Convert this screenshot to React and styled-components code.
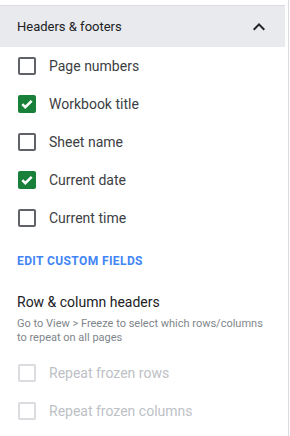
import React from "react";
import styled, { createGlobalStyle } from "styled-components";

const Global = createGlobalStyle`
  html, body { margin: 0; padding: 0; background: #fff; }
  body { font-family: Roboto, "Noto Sans", Arial, sans-serif; -webkit-font-smoothing: antialiased; }
`;

const Frame = styled.div`
  width: 289px;
  height: 436px;
  border-right: 1px solid #dadce0;
  padding-top: 5px;
  box-sizing: border-box;
  overflow: hidden;
`;

const Section = styled.section`
  width: 285px;
  border-top: 1px solid #dadce0;
`;

const SectionHeader = styled.div`
  height: 41px;
  background: #e8eaed;
  display: flex;
  align-items: center;
  justify-content: space-between;
  padding: 0 14px 0 17px;
  color: #202124;
  font-size: 13px;
`;

const Chevron = styled.svg`
  width: 24px;
  height: 24px;
  fill: #202124;
`;

const Body = styled.div`
  padding: 0 17px;
`;

const Row = styled.label`
  height: 38px;
  display: flex;
  align-items: center;
  gap: 13px;
  padding-left: 1px;
  font-size: 14px;
  color: ${(p) => (p.$disabled ? "#bdc1c6" : "#3c4043")};
`;

const Box = styled.span`
  width: 18px;
  height: 18px;
  box-sizing: border-box;
  border-radius: 2px;
  border: 2px solid
    ${(p) => (p.$disabled ? "#dadce0" : p.$checked ? "#188038" : "#5f6368")};
  background: ${(p) => (p.$checked ? "#188038" : "transparent")};
  display: flex;
  align-items: center;
  justify-content: center;
  flex-shrink: 0;
`;

const Tick = styled.svg`
  width: 14px;
  height: 14px;
  fill: none;
  stroke: #fff;
  stroke-width: 2.6;
`;

const LinkButton = styled.div`
  margin-top: 16px;
  height: 16px;
  line-height: 16px;
  font-size: 12px;
  font-weight: 700;
  letter-spacing: 0.4px;
  color: #4285f4;
`;

const SubTitle = styled.div`
  margin-top: 23px;
  line-height: 20px;
  font-size: 14px;
  color: #202124;
`;

const Hint = styled.div`
  margin-top: 5px;
  font-size: 11px;
  line-height: 14px;
  color: #80868b;
  white-space: nowrap;
  margin-bottom: 9px;
`;

const Checkbox = ({ checked, disabled, children }) => (
  <Row $disabled={disabled}>
    <Box $checked={checked} $disabled={disabled}>
      {checked && (
        <Tick viewBox="0 0 14 14">
          <path d="M2.3 7.2l3 3 6.4-6.4" />
        </Tick>
      )}
    </Box>
    {children}
  </Row>
);

export default function App() {
  return (
    <>
      <Global />
      <Frame>
        <Section>
          <SectionHeader>
            <span>Headers &amp; footers</span>
            <Chevron viewBox="0 0 24 24">
              <path d="M12 8l-6 6 1.41 1.41L12 10.83l4.59 4.58L18 14z" />
            </Chevron>
          </SectionHeader>
          <Body>
            <Checkbox>Page numbers</Checkbox>
            <Checkbox checked>Workbook title</Checkbox>
            <Checkbox>Sheet name</Checkbox>
            <Checkbox checked>Current date</Checkbox>
            <Checkbox>Current time</Checkbox>
            <LinkButton>EDIT CUSTOM FIELDS</LinkButton>
            <SubTitle>Row &amp; column headers</SubTitle>
            <Hint>
              Go to View &gt; Freeze to select which rows/columns
              <br />
              to repeat on all pages
            </Hint>
            <Checkbox disabled>Repeat frozen rows</Checkbox>
            <Checkbox disabled>Repeat frozen columns</Checkbox>
          </Body>
        </Section>
      </Frame>
    </>
  );
}
